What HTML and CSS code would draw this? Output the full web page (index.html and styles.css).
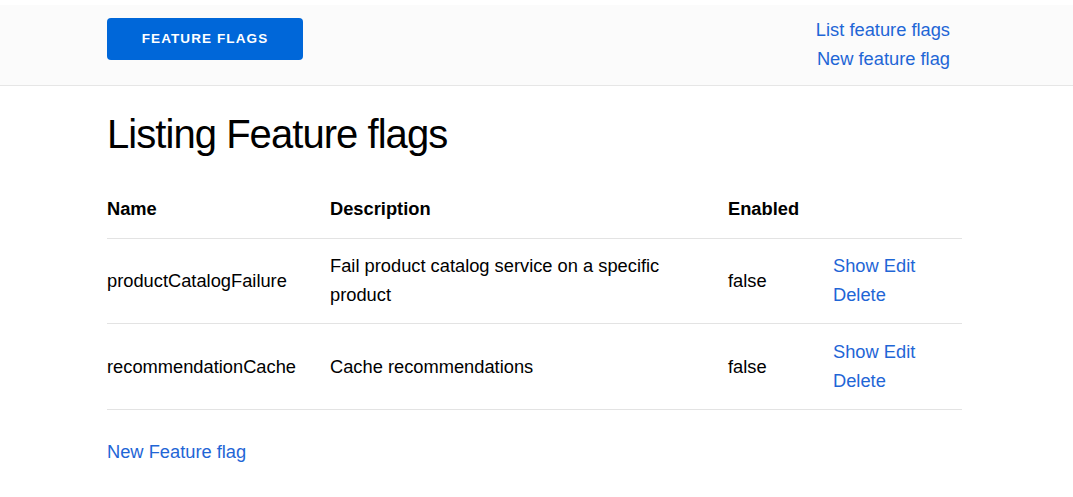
FILE: index.html
```html
<!DOCTYPE html>
<html lang="en">
<head>
<meta charset="utf-8">
<title>Feature flags</title>
<link rel="stylesheet" href="styles.css">
</head>
<body>
<header class="topbar">
  <div class="container topbar-inner">
    <a class="brand" href="#">Feature flags</a>
    <nav class="nav">
      <a href="#">List feature flags</a>
      <a href="#">New feature flag</a>
    </nav>
  </div>
</header>
<main class="container">
  <h1 class="title">Listing Feature flags</h1>
  <table class="flags">
    <colgroup>
      <col class="c-name">
      <col class="c-desc">
      <col class="c-enabled">
      <col class="c-actions">
    </colgroup>
    <thead>
      <tr>
        <th>Name</th>
        <th>Description</th>
        <th>Enabled</th>
        <th></th>
      </tr>
    </thead>
    <tbody>
      <tr>
        <td>productCatalogFailure</td>
        <td>Fail product catalog service on a specific product</td>
        <td>false</td>
        <td class="actions"><a href="#">Show</a> <a href="#">Edit</a> <a href="#">Delete</a></td>
      </tr>
      <tr>
        <td>recommendationCache</td>
        <td>Cache recommendations</td>
        <td>false</td>
        <td class="actions"><a href="#">Show</a> <a href="#">Edit</a> <a href="#">Delete</a></td>
      </tr>
    </tbody>
  </table>
  <p class="footer-link"><a href="#">New Feature flag</a></p>
</main>
</body>
</html>
```
FILE: styles.css
```css
* { box-sizing: border-box; }

html, body {
  margin: 0;
  padding: 0;
  background: #fff;
}

body {
  font-family: "Liberation Sans", Arial, sans-serif;
  font-size: 18.3px;
  line-height: 29px;
  color: #000;
}

a {
  color: #1f66d6;
  text-decoration: none;
}

.container {
  width: 859px;
  padding-right: 4px;
  margin: 0 auto;
}

.topbar {
  margin-top: 5px;
  height: 81px;
  background: #fbfbfb;
  border-bottom: 1px solid #e6e6e6;
}

.topbar-inner {
  display: flex;
  justify-content: space-between;
  align-items: flex-start;
}

.brand {
  display: flex;
  align-items: center;
  justify-content: center;
  margin-top: 13px;
  width: 196px;
  height: 42px;
  background: #0067d9;
  color: #fff;
  border-radius: 4px;
  font-size: 13.5px;
  font-weight: bold;
  letter-spacing: 1.1px;
  text-transform: uppercase;
  line-height: 1;
}

.nav {
  display: flex;
  flex-direction: column;
  align-items: flex-end;
  padding-top: 10px;
  padding-right: 12px;
}

.title {
  margin: 24px 0 24px;
  font-size: 40px;
  line-height: 48px;
  font-weight: normal;
  letter-spacing: -0.95px;
}

.flags {
  width: 855px;
  border-collapse: collapse;
  table-layout: fixed;
}

.c-name { width: 223px; }
.c-desc { width: 398px; }
.c-enabled { width: 105px; }
.c-actions { width: 129px; }

.flags th {
  text-align: left;
  font-weight: bold;
  padding: 12px 12px 15px 0;
  border-bottom: 1px solid #e3e3e3;
  vertical-align: middle;
}

.flags td {
  padding: 12px 12px 14px 0;
  border-bottom: 1px solid #e3e3e3;
  vertical-align: middle;
}

.flags tbody tr:last-child td {
  padding-top: 13px;
}

.footer-link {
  margin: 27px 0 0;
}
```
